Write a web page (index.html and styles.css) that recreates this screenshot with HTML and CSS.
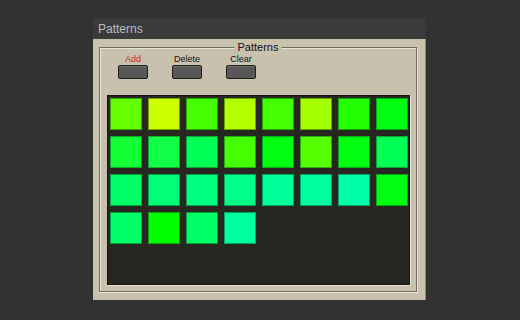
FILE: index.html
```html
<!DOCTYPE html>
<html lang="en">
<head>
    <meta charset="UTF-8">
    <title>Patterns</title>
    <link rel="stylesheet" href="styles.css">
</head>
<body>
    <div class="window">
        <div class="title-bar">Patterns</div>
        <div class="window-body">
            <div class="group">
                <span class="group-label">Patterns</span>
                <div class="toolbar">
                    <div class="tool">
                        <span class="tool-label add">Add</span>
                        <button class="tool-button"></button>
                    </div>
                    <div class="tool">
                        <span class="tool-label">Delete</span>
                        <button class="tool-button"></button>
                    </div>
                    <div class="tool">
                        <span class="tool-label">Clear</span>
                        <button class="tool-button"></button>
                    </div>
                </div>
                <!-- Pattern slots -->
                <div class="pattern-grid">
                    <div class="cell" style="background:#66ff00"></div>
                    <div class="cell" style="background:#ccff00"></div>
                    <div class="cell" style="background:#44ff00"></div>
                    <div class="cell" style="background:#b3ff00"></div>
                    <div class="cell" style="background:#44ff00"></div>
                    <div class="cell" style="background:#a6ff00"></div>
                    <div class="cell" style="background:#22ff00"></div>
                    <div class="cell" style="background:#00ff11"></div>

                    <div class="cell" style="background:#11ff33"></div>
                    <div class="cell" style="background:#11ff44"></div>
                    <div class="cell" style="background:#00ff55"></div>
                    <div class="cell" style="background:#44ff00"></div>
                    <div class="cell" style="background:#00ff11"></div>
                    <div class="cell" style="background:#55ff00"></div>
                    <div class="cell" style="background:#00ff11"></div>
                    <div class="cell" style="background:#00ff55"></div>

                    <div class="cell" style="background:#00ff66"></div>
                    <div class="cell" style="background:#00ff77"></div>
                    <div class="cell" style="background:#00ff80"></div>
                    <div class="cell" style="background:#00ff88"></div>
                    <div class="cell" style="background:#00ff99"></div>
                    <div class="cell" style="background:#00ffa0"></div>
                    <div class="cell" style="background:#00ffaa"></div>
                    <div class="cell" style="background:#00ff11"></div>

                    <div class="cell" style="background:#00ff66"></div>
                    <div class="cell" style="background:#00ff00"></div>
                    <div class="cell" style="background:#00ff66"></div>
                    <div class="cell" style="background:#00ffa0"></div>
                </div>
            </div>
        </div>
    </div>
</body>
</html>
```

FILE: styles.css
```css
body {
    margin: 0;
    padding: 18px 0 0 93px;
    background-color: #323232;
    font-family: "Liberation Sans", Arial, sans-serif;
    height: 320px;
    box-sizing: border-box;
    overflow: hidden;
}

.window {
    width: 333px;
}

.title-bar {
    height: 21px;
    line-height: 22px;
    padding-left: 5px;
    background-color: #3b3b3b;
    color: #bdbdbd;
    font-size: 12px;
}

.window-body {
    height: 261px;
    box-sizing: border-box;
    padding: 8px 8px 8px 6px;
    background-color: #c7c1ad;
    border-right: 1px solid #8c8878;
}

/* Etched group box */
.group {
    position: relative;
    height: 245px;
    box-sizing: border-box;
    padding: 5px 6px 5px 7px;
    border: 1px solid #6f6b5f;
    box-shadow: inset 1px 1px 0 #e9e5d9, 1px 1px 0 #e9e5d9;
}

.group-label {
    position: absolute;
    top: -8px;
    left: 50%;
    transform: translateX(-50%);
    padding: 0 3px;
    background-color: #c7c1ad;
    color: #111;
    font-size: 11px;
    line-height: 14px;
}

.toolbar {
    display: flex;
    gap: 24px;
    padding-left: 11px;
    height: 42px;
}

.tool {
    display: flex;
    flex-direction: column;
    align-items: center;
    width: 30px;
}

.tool-label {
    font-size: 9px;
    line-height: 12px;
    color: #111;
    white-space: nowrap;
}

.tool-label.add {
    color: #d42626;
}

.tool-button {
    width: 30px;
    height: 14px;
    padding: 0;
    background-color: #585858;
    border: 1px solid #1e1e1e;
    border-radius: 2px;
    box-shadow: inset 0 1px 0 #707070;
}

.pattern-grid {
    display: grid;
    grid-template-columns: repeat(8, 32px);
    grid-auto-rows: 32px;
    gap: 6px;
    align-content: start;
    height: 190px;
    box-sizing: border-box;
    padding: 2px;
    background-color: #282621;
    border: 1px solid #15140f;
    box-shadow: 1px 1px 0 #e9e5d9;
}

.cell {
    box-sizing: border-box;
    border: 1px solid rgba(0, 60, 20, 0.45);
}
```
